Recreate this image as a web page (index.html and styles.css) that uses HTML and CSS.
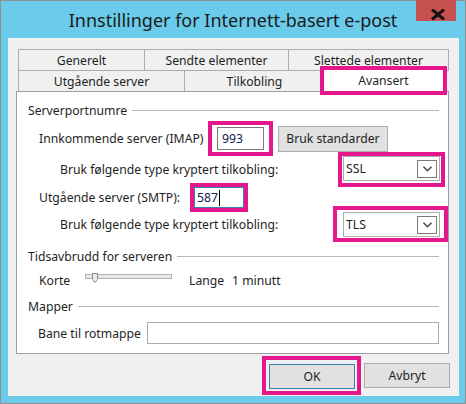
FILE: index.html
```html
<!DOCTYPE html>
<html lang="nb">
<head>
  <meta charset="UTF-8">
  <meta name="viewport" content="width=device-width, initial-scale=1.0">
  <title>Innstillinger for Internett-basert e-post</title>
  <link rel="stylesheet" href="styles.css">
</head>
<body>
  <div class="window">
    <div class="titlebar">
      <span class="title">Innstillinger for Internett-basert e-post</span>
      <div class="close">
        <svg width="16" height="11" viewBox="0 0 16 11">
          <path d="M2 0.5 L14 10.5 M14 0.5 L2 10.5" stroke="#111" stroke-width="3" fill="none"/>
        </svg>
      </div>
    </div>

    <div class="client">
      <div class="tab-row">
        <div class="tab tab-gen">Generelt</div>
        <div class="tab tab-sent">Sendte elementer</div>
        <div class="tab tab-del">Slettede elementer</div>
      </div>
      <div class="tab-row">
        <div class="tab tab-out">Utgående server</div>
        <div class="tab tab-conn">Tilkobling</div>
        <div class="tab tab-active mark">Avansert</div>
      </div>

      <div class="panel">
        <div class="group">Serverportnumre</div>

        <div class="field imap">
          <span class="label-imap">Innkommende server (IMAP)</span>
          <span class="mark mark-imap"><span class="input port-imap">993</span></span>
          <button class="btn btn-default">Bruk standarder</button>
        </div>

        <div class="field crypt ssl">
          <span>Bruk følgende type kryptert tilkobling:</span>
          <span class="mark mark-ssl">
            <span class="select">SSL
              <span class="arrow"><svg width="9" height="6" viewBox="0 0 9 6"><polyline points="0.5,0.8 4.5,4.8 8.5,0.8" fill="none" stroke="#444" stroke-width="1.4"/></svg></span>
            </span>
          </span>
        </div>

        <div class="field smtp">
          <span class="label-smtp">Utgående server (SMTP):</span>
          <span class="mark mark-smtp"><span class="input port-smtp">587<span class="caret"></span></span></span>
        </div>

        <div class="field crypt tls">
          <span>Bruk følgende type kryptert tilkobling:</span>
          <span class="mark mark-tls">
            <span class="select">TLS
              <span class="arrow"><svg width="9" height="6" viewBox="0 0 9 6"><polyline points="0.5,0.8 4.5,4.8 8.5,0.8" fill="none" stroke="#444" stroke-width="1.4"/></svg></span>
            </span>
          </span>
        </div>

        <div class="group group-timeout">Tidsavbrudd for serveren</div>

        <div class="field timeout">
          <span class="label-short">Korte</span>
          <span class="slider">
            <span class="track"></span>
            <svg class="thumb" width="6" height="10" viewBox="0 0 6 10">
              <path d="M0.5 0.5 H5.5 V6.5 L3 9.5 L0.5 6.5 Z" fill="#ececec" stroke="#8a8a8a"/>
            </svg>
          </span>
          <span class="label-long">Lange</span>
          <span>1 minutt</span>
        </div>

        <div class="group group-folders">Mapper</div>

        <div class="field root">
          <span class="label-root">Bane til rotmappe</span>
          <span class="input path"></span>
        </div>
      </div>

      <div class="footer">
        <span class="mark mark-ok"><button class="btn btn-ok">OK</button></span>
        <button class="btn btn-cancel">Avbryt</button>
      </div>
    </div>
  </div>
</body>
</html>
```

FILE: styles.css
```css
body {
  margin: 0;
  font-family: "Noto Sans", "Open Sans", sans-serif;
  font-size: 12.2px;
  color: #1e1e1e;
  background: #fff;
}

.window {
  width: 466px;
  height: 404px;
  box-sizing: border-box;
  border: 1px solid #8f8f8f;
  background: #6bcbea;
  display: flex;
  flex-direction: column;
}

/* title bar */
.titlebar {
  position: relative;
  height: 37px;
  flex-shrink: 0;
}

.title {
  display: block;
  text-align: center;
  font-size: 18px;
  line-height: 24px;
  padding-top: 7px;
  color: #1a1a1a;
}

.close {
  position: absolute;
  top: -1px;
  right: 9px;
  width: 40px;
  height: 21px;
  box-sizing: border-box;
  padding: 9px 0 0 14px;
  background: #c75050;
}

.close svg {
  display: block;
}

/* client area */
.client {
  flex: 1;
  margin: 0 6px 7px 7px;
  padding: 11px 10px 0 8px;
  background: #f0f0f0;
  display: flex;
  flex-direction: column;
}

.mark {
  outline: 4px solid #e5178d;
}

/* tabs */
.tab-row {
  display: flex;
  height: 22px;
  margin-left: 2px;
}

.tab-row + .tab-row {
  margin-top: -1px;
}

.tab {
  box-sizing: border-box;
  border: 1px solid #acacac;
  background: #f0f0f0;
  display: flex;
  align-items: center;
  justify-content: center;
}

.tab + .tab {
  margin-left: -1px;
}

.tab-gen { width: 127px; }
.tab-sent { width: 145px; }
.tab-del { width: 161px; }
.tab-out { width: 167px; }
.tab-conn { width: 141px; }

.tab-active {
  position: relative;
  z-index: 1;
  width: 119px;
  height: 21px;
  align-self: flex-start;
  border: none;
  background: #fff;
}

/* tab page */
.panel {
  margin-top: -1px;
  height: 263px;
  box-sizing: border-box;
  border: 1px solid #9d9d9d;
  background: #fff;
  padding: 8px 9px 0 11px;
}

.group {
  display: flex;
  align-items: center;
  height: 20px;
}

.group::after {
  content: "";
  flex: 1;
  height: 1px;
  margin-left: 5px;
  background: #b9b9b9;
}

.group-timeout { margin-top: 8px; }
.group-folders { margin-top: 6px; }

.field {
  display: flex;
  align-items: center;
}

.input {
  box-sizing: border-box;
  display: flex;
  align-items: center;
  background: #fff;
  border: 1px solid #7a7a7a;
}

.btn {
  box-sizing: border-box;
  padding: 0;
  font: inherit;
  color: #1e1e1e;
  background: #e1e1e1;
  border: 1px solid #adadad;
  display: flex;
  align-items: center;
  justify-content: center;
}

/* ports */
.imap {
  margin-top: 5px;
  padding-left: 11px;
}

.label-imap {
  width: 173px;
  flex-shrink: 0;
}

.mark-imap {
  display: flex;
  padding: 2px 5px;
}

.port-imap {
  width: 47px;
  height: 23px;
  padding-left: 4px;
  color: #10205a;
}

.btn-default {
  width: 110px;
  height: 26px;
  margin-left: 9px;
}

.crypt {
  padding-left: 32px;
}

.ssl { margin-top: 4px; }
.tls { margin-top: 2px; }

.mark-ssl {
  display: flex;
  margin-left: auto;
  margin-right: -2px;
  padding: 0 1px 2px 1px;
}

.mark-tls {
  display: flex;
  margin-left: auto;
  margin-right: -5px;
  padding: 2px 4px 1px 6px;
}

.select {
  box-sizing: border-box;
  width: 97px;
  height: 25px;
  padding: 0 2px 0 2px;
  border: 1px solid #acacac;
  background: #fff;
  display: flex;
  align-items: center;
  justify-content: space-between;
}

.arrow {
  box-sizing: border-box;
  width: 20px;
  height: 18px;
  border: 1px solid #7a7a7a;
  display: flex;
  align-items: center;
  justify-content: center;
}

.arrow svg {
  display: block;
}

.smtp {
  margin-top: 4px;
  padding-left: 11px;
}

.label-smtp {
  width: 155px;
  flex-shrink: 0;
}

.mark-smtp {
  display: flex;
}

.port-smtp {
  width: 50px;
  height: 21px;
  padding-left: 2px;
  border-color: #3c7fb1;
  color: #10205a;
}

.caret {
  display: inline-block;
  width: 0;
  height: 16px;
  margin-left: 1px;
  border-left: 1px solid #000;
}

/* timeout slider */
.timeout {
  height: 20px;
  margin-top: 4px;
  padding-left: 11px;
}

.label-short {
  width: 46px;
}

.slider {
  position: relative;
  width: 87px;
  height: 10px;
  margin-bottom: 4px;
}

.track {
  display: block;
  box-sizing: border-box;
  height: 5px;
  margin-top: 1px;
  border: 1px solid #b4b4b4;
  background: #e7e7e7;
}

.thumb {
  position: absolute;
  top: 0;
  left: 7px;
}

.label-long {
  width: 43px;
  margin-left: 17px;
}

/* folders */
.root {
  margin-top: 6px;
  padding-left: 10px;
}

.label-root {
  width: 109px;
  flex-shrink: 0;
}

.path {
  width: 293px;
  height: 22px;
  border-color: #abadb3;
}

/* dialog buttons */
.footer {
  flex: 1;
  display: flex;
  justify-content: flex-end;
  align-items: center;
  margin-right: -1px;
}

.mark-ok {
  display: flex;
  padding: 4px 2px 2px 3px;
}

.btn-ok,
.btn-cancel {
  width: 86px;
  height: 25px;
}

.btn-ok {
  border-color: #3c7fb1;
}

.btn-cancel {
  margin-left: 7px;
}
```
